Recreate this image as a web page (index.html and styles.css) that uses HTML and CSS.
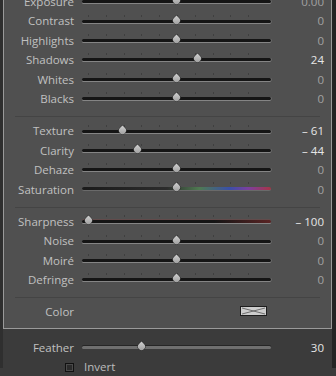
FILE: index.html
```html
<!DOCTYPE html>
<html lang="en">
<head>
    <meta charset="UTF-8">
    <title>Develop Panel</title>
    <link rel="stylesheet" href="styles.css">
</head>
<body>
    <div class="wrap">
        <div class="box">
            <!-- Tone -->
            <div class="group first">
                <div class="row">
                    <span class="label">Exposure</span>
                    <div class="track"><div class="rail"><span class="thumb" style="left: 50%"></span></div></div>
                    <span class="value">0.00</span>
                </div>
                <div class="row">
                    <span class="label">Contrast</span>
                    <div class="track"><div class="rail"><span class="thumb" style="left: 50%"></span></div></div>
                    <span class="value">0</span>
                </div>
                <div class="row">
                    <span class="label">Highlights</span>
                    <div class="track"><div class="rail"><span class="thumb" style="left: 50%"></span></div></div>
                    <span class="value">0</span>
                </div>
                <div class="row">
                    <span class="label">Shadows</span>
                    <div class="track"><div class="rail"><span class="thumb" style="left: 62%"></span></div></div>
                    <span class="value set">24</span>
                </div>
                <div class="row">
                    <span class="label">Whites</span>
                    <div class="track"><div class="rail"><span class="thumb" style="left: 50%"></span></div></div>
                    <span class="value">0</span>
                </div>
                <div class="row">
                    <span class="label">Blacks</span>
                    <div class="track"><div class="rail"><span class="thumb" style="left: 50%"></span></div></div>
                    <span class="value">0</span>
                </div>
            </div>

            <!-- Presence -->
            <div class="group">
                <div class="row">
                    <span class="label">Texture</span>
                    <div class="track"><div class="rail"><span class="thumb" style="left: 19.5%"></span></div></div>
                    <span class="value set">&ndash; 61</span>
                </div>
                <div class="row">
                    <span class="label">Clarity</span>
                    <div class="track"><div class="rail"><span class="thumb" style="left: 28%"></span></div></div>
                    <span class="value set">&ndash; 44</span>
                </div>
                <div class="row">
                    <span class="label">Dehaze</span>
                    <div class="track"><div class="rail"><span class="thumb" style="left: 50%"></span></div></div>
                    <span class="value">0</span>
                </div>
                <div class="row">
                    <span class="label">Saturation</span>
                    <div class="track saturation"><div class="rail"><span class="thumb" style="left: 50%"></span></div></div>
                    <span class="value">0</span>
                </div>
            </div>

            <!-- Detail -->
            <div class="group">
                <div class="row">
                    <span class="label">Sharpness</span>
                    <div class="track sharpness"><div class="rail"><span class="thumb" style="left: 0%"></span></div></div>
                    <span class="value set">&ndash; 100</span>
                </div>
                <div class="row">
                    <span class="label">Noise</span>
                    <div class="track"><div class="rail"><span class="thumb" style="left: 50%"></span></div></div>
                    <span class="value">0</span>
                </div>
                <div class="row">
                    <span class="label">Moiré</span>
                    <div class="track"><div class="rail"><span class="thumb" style="left: 50%"></span></div></div>
                    <span class="value">0</span>
                </div>
                <div class="row">
                    <span class="label">Defringe</span>
                    <div class="track"><div class="rail"><span class="thumb" style="left: 50%"></span></div></div>
                    <span class="value">0</span>
                </div>
            </div>

            <div class="group last">
                <div class="row">
                    <span class="label">Color</span>
                    <div class="swatch">
                        <svg width="27" height="10" viewBox="0 0 27 10">
                            <rect x="0.5" y="0.5" width="26" height="9" fill="#cdcdcd" stroke="#1e1e1e"/>
                            <path d="M2 2 L25 8 M2 8 L25 2" stroke="#555" stroke-width="0.8" fill="none"/>
                        </svg>
                    </div>
                    <span class="value"></span>
                </div>
            </div>
        </div>

        <div class="lower">
            <div class="row">
                <span class="label">Feather</span>
                <div class="track lite"><div class="rail"><span class="thumb" style="left: 30%"></span></div></div>
                <span class="value set">30</span>
            </div>
            <div class="row check-row">
                <span class="label"><span class="checkbox"></span></span>
                <span class="check-text">Invert</span>
            </div>
        </div>
    </div>
</body>
</html>
```

FILE: styles.css
```css
:root {
    --panel: #505050;
    --panel-dark: #3b3b3b;
    --label: #c0c0c0;
    --row-h: 19.4px;
}

* {
    box-sizing: border-box;
    margin: 0;
    padding: 0;
}

body {
    width: 336px;
    height: 376px;
    overflow: hidden;
    background: var(--panel-dark);
    font-family: 'Open Sans', sans-serif;
    font-size: 11.5px;
    color: var(--label);
}

.wrap {
    height: 100%;
    border-left: 3px solid #2f2f2f;
    border-right: 4px solid #242424;
}

.box {
    background: var(--panel);
    border: 1px solid #9a9a9a;
    border-top: none;
    padding-bottom: 6px;
}

.group {
    padding: 4px 0 8px;
    border-bottom: 1px solid #444;
    margin: 0 11px;
}

.group .row {
    margin: 0 -11px;
}

.group.first {
    margin-top: -8px;
    padding-top: 0;
}

.group.last {
    border-bottom: none;
    padding-bottom: 0;
}

.row {
    display: grid;
    grid-template-columns: 70px 189px 45px;
    column-gap: 8px;
    align-items: center;
    height: var(--row-h);
    line-height: var(--row-h);
}

.label {
    text-align: right;
    white-space: nowrap;
}

.value {
    text-align: right;
    margin-left: -8px;
    color: #a2a2a2;
}

.value.set {
    color: #e6e6e6;
}

.track {
    height: 3px;
    border-radius: 2px;
    background: #151515;
    box-shadow: 0 1px 0 #858585, 1px 0 0 #6a6a6a;
}

.track.saturation {
    box-shadow: none;
    background: linear-gradient(to right, #1a1a1a 0%, #2c2c2c 45%, #4f7a52 62%, #3a4fa8 78%, #7c3f9e 88%, #a83446 100%);
    border-bottom: 1px solid #6a6a6a;
    height: 4px;
}

.track.sharpness {
    background: linear-gradient(to right, #151515 70%, #5a2424 100%);
    box-shadow: 0 1px 0 #858585, 0 -1px 0 rgba(150, 60, 60, 0.25);
}

.track.lite {
    background: #6f6f6f;
    box-shadow: 0 -1px 0 #262626;
}

.rail {
    position: relative;
    height: 100%;
    margin: 0 6px;
}

.rail::before {
    content: '';
    position: absolute;
    left: 0;
    width: calc(100% + 1px);
    top: -5px;
    height: 2px;
    background: repeating-linear-gradient(to right, #3f3f3f 0 1px, transparent 1px 10%);
}

.lower .rail::before {
    display: none;
}

.thumb {
    position: absolute;
    top: 50%;
    width: 7px;
    height: 7px;
    margin: -4.5px 0 0 -3.5px;
    transform: rotate(45deg);
    border-radius: 0 50% 50% 50%;
    background: linear-gradient(135deg, #d0d0d0, #9a9a9a);
    box-shadow: 0 0 0 0.5px #2a2a2a;
}

.swatch {
    display: flex;
    justify-content: flex-end;
    padding-right: 4px;
    height: 10px;
    margin-top: -2px;
}

.lower {
    padding: 9px 15px 0 1px;
}

.check-row {
    grid-template-columns: 70px auto;
    column-gap: 10px;
}

.checkbox {
    display: inline-block;
    width: 9px;
    height: 9px;
    border: 1px solid #111;
    background: #2b2b2b;
    box-shadow: inset 0 0 0 1px #4a4a4a;
    vertical-align: middle;
    margin-top: -2px;
}

.check-text {
    color: #bbb;
}
```
